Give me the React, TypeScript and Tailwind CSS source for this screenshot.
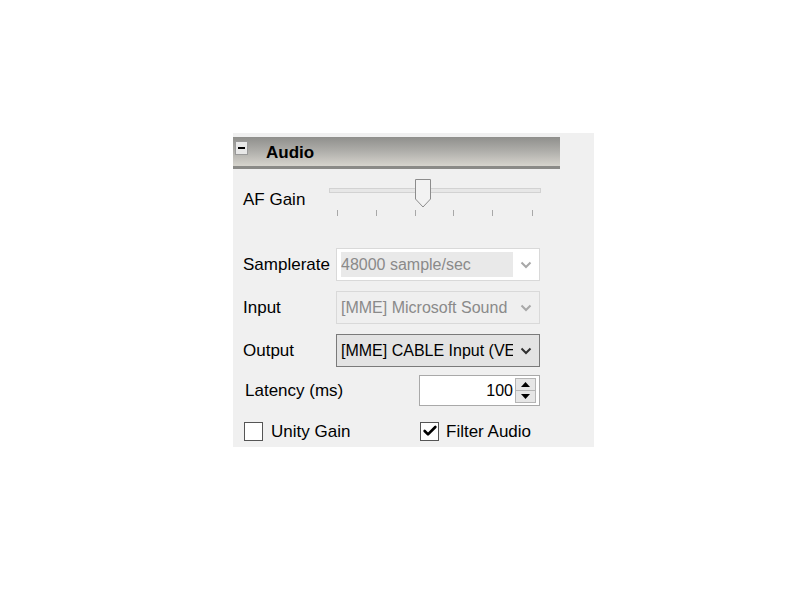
import { Check } from "lucide-react";

const font = "font-['Liberation_Sans',Arial,sans-serif]";

const ticks = [8, 47, 86, 124, 163, 203];

function Chevron({ color }: { color: string }) {
  return (
    <svg width="12" height="8" viewBox="0 0 12 8">
      <polyline points="1.5,1.5 6,6 10.5,1.5" fill="none" stroke={color} strokeWidth="2" />
    </svg>
  );
}

function Combo({
  text,
  variant,
}: {
  text: string;
  variant: "disabled-white" | "disabled" | "active";
}) {
  const box =
    variant === "disabled-white"
      ? "bg-white border-[#d9d9d9]"
      : variant === "disabled"
      ? "bg-[#efefef] border-[#d9d9d9]"
      : "bg-[#e3e3e3] border-[#7a7a7a]";
  const txt = variant === "active" ? "text-black" : "text-[#8a8a8a]";
  return (
    <div className={`ml-auto mr-[54px] w-[204px] h-[33px] border flex items-center ${box}`}>
      <div
        className={`ml-[4px] w-[172px] h-[25px] flex items-center overflow-hidden whitespace-nowrap text-[16px] ${txt} ${
          variant === "disabled-white" ? "bg-[#e9e9e9]" : ""
        }`}
      >
        {text}
      </div>
      <div className="flex-1 flex justify-center">
        <Chevron color={variant === "active" ? "#303030" : "#a8a8a8"} />
      </div>
    </div>
  );
}

export default function App() {
  return (
    <div className={`w-[800px] h-[600px] bg-white pt-[133px] pl-[233px] ${font}`}>
      <div className="w-[361px] h-[314px] bg-[#f0f0f0] flex flex-col">
        {/* Header */}
        <div className="mt-[4px] w-[327px] h-[32px] bg-gradient-to-b from-[#8f8f8c] via-[#b0afab] to-[#d6d4cd] border-b-[3px] border-[#8a8a87] flex items-start">
          <div className="mt-[4px] ml-[2px] w-[13px] h-[14px] bg-[#e8e8e8] border border-[#9a9a9a] flex items-center justify-center">
            <div className="w-[7px] h-[2px] bg-black" />
          </div>
          <span className="mt-[6px] ml-[18px] leading-[20px] text-[17px] font-bold text-black">Audio</span>
        </div>

        {/* AF Gain slider */}
        <div className="h-[51px] flex pl-[10px]">
          <span className="mt-[21px] w-[86px] h-[20px] leading-[20px] text-[17px] text-black">
            AF Gain
          </span>
          <div className="relative w-[212px] h-full">
            <div className="absolute left-0 right-0 top-[19px] h-[5px] bg-[#e7e7e7] border border-[#d2d2d2]" />
            <svg className="absolute left-[85px] top-[9px]" width="18" height="31" viewBox="0 0 18 31">
              <path d="M1.5 1.5 H16.5 V21 L9 29 L1.5 21 Z" fill="#f2f2f2" stroke="#8c8c8c" strokeWidth="1" />
            </svg>
            {ticks.map((t) => (
              <div key={t} className="absolute top-[41px] h-[6px] w-[1px] bg-[#a8a8a8]" style={{ left: t }} />
            ))}
          </div>
        </div>

        {/* Samplerate */}
        <div className="mt-[28px] h-[33px] flex items-center pl-[10px] text-[17px] text-black">
          <span>Samplerate</span>
          <Combo text="48000 sample/sec" variant="disabled-white" />
        </div>

        {/* Input */}
        <div className="mt-[10px] h-[33px] flex items-center pl-[10px] text-[17px] text-black">
          <span>Input</span>
          <Combo text="[MME] Microsoft Sound" variant="disabled" />
        </div>

        {/* Output */}
        <div className="mt-[10px] h-[33px] flex items-center pl-[10px] text-[17px] text-black">
          <span>Output</span>
          <Combo text="[MME] CABLE Input (VE" variant="active" />
        </div>

        {/* Latency */}
        <div className="mt-[8px] h-[31px] flex items-center pl-[12px] text-[17px] text-black">
          <span className="mt-[1px]">Latency (ms)</span>
          <div className="ml-auto mr-[54px] w-[121px] h-[31px] bg-white border border-[#a9a9a9] flex items-center">
            <span className="flex-1 text-right pr-[2px] text-[16px] text-black">100</span>
            <div className="mr-[3px] w-[21px] h-[25px] flex flex-col border border-[#b5b5b5] bg-[#e6e6e6]">
              <div className="flex-1 flex items-center justify-center border-b border-[#b5b5b5]">
                <svg width="9" height="5" viewBox="0 0 9 5">
                  <path d="M0 5 L4.5 0 L9 5 Z" fill="#000" />
                </svg>
              </div>
              <div className="flex-1 flex items-center justify-center">
                <svg width="9" height="5" viewBox="0 0 9 5">
                  <path d="M0 0 L4.5 5 L9 0 Z" fill="#000" />
                </svg>
              </div>
            </div>
          </div>
        </div>

        {/* Checkboxes */}
        <div className="mt-[15px] h-[20px] flex items-center pl-[11px] text-[17px] text-black">
          <div className="w-[176px] flex items-center">
            <div className="w-[19px] h-[19px] bg-white border border-[#555]" />
            <span className="ml-[8px] mt-[2px]">Unity Gain</span>
          </div>
          <div className="flex items-center">
            <div className="w-[19px] h-[19px] bg-white border border-[#555] flex items-center justify-center">
              <Check size={16} strokeWidth={4} color="#000" />
            </div>
            <span className="ml-[7px] mt-[2px]">Filter Audio</span>
          </div>
        </div>
      </div>
    </div>
  );
}
